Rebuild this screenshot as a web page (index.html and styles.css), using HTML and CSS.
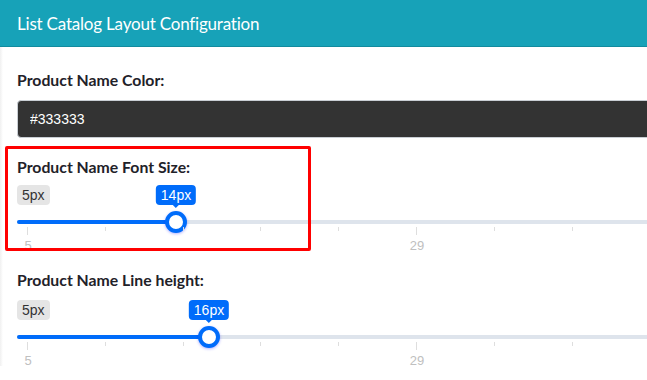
FILE: index.html
```html
<!DOCTYPE html>
<html lang="en">
<head>
  <meta charset="UTF-8">
  <title>List Catalog Layout Configuration</title>
  <link rel="stylesheet" href="styles.css">
</head>
<body>

  <div class="card">
    <div class="card-header">
      <h3 class="card-title">List Catalog Layout Configuration</h3>
    </div>

    <div class="card-body">
      <div class="form-group">
        <label class="form-label">Product Name Color:</label>
        <input class="color-input" type="text" value="#333333">
      </div>

      <div class="highlight">
        <div class="form-group">
          <label class="form-label">Product Name Font Size:</label>
          <div class="irs">
            <div class="irs-labels">
              <span class="irs-min">5px</span>
              <span class="irs-single" style="left: 159px">14px</span>
            </div>
            <div class="irs-line">
              <div class="irs-bar" style="width: 159px"></div>
              <span class="irs-handle" style="left: 159px"></span>
            </div>
            <div class="irs-grid">
              <span class="tick big"><em>5</em></span>
              <span class="tick"></span>
              <span class="tick"></span>
              <span class="tick"></span>
              <span class="tick"></span>
              <span class="tick big"><em>29</em></span>
              <span class="tick"></span>
              <span class="tick"></span>
              <span class="tick"></span>
            </div>
          </div>
        </div>
      </div>

      <div class="form-group">
        <label class="form-label">Product Name Line height:</label>
        <div class="irs">
          <div class="irs-labels">
            <span class="irs-min">5px</span>
            <span class="irs-single" style="left: 192px">16px</span>
          </div>
          <div class="irs-line">
            <div class="irs-bar" style="width: 192px"></div>
            <span class="irs-handle" style="left: 192px"></span>
          </div>
          <div class="irs-grid">
            <span class="tick big"><em>5</em></span>
            <span class="tick"></span>
            <span class="tick"></span>
            <span class="tick"></span>
            <span class="tick"></span>
            <span class="tick big"><em>29</em></span>
            <span class="tick"></span>
            <span class="tick"></span>
            <span class="tick"></span>
          </div>
        </div>
      </div>
    </div>
  </div>

</body>
</html>
```

FILE: styles.css
```css
body {
  margin: 0;
  background: #fff;
  overflow: hidden;
  font-family: Lato, "Liberation Sans", sans-serif;
  color: #212529;
}
.card {
  width: 1000px;
}
.card-header {
  background: #17a2b8;
  border-bottom: 1px solid #128b9e;
  height: 46px;
  padding: 0 17px;
  display: flex;
  align-items: center;
}
.card-title {
  margin: 0;
  font-size: 17px;
  font-weight: 400;
  letter-spacing: -0.2px;
  color: #fff;
}
.card-body {
  padding: 22px 17px 0;
  background: linear-gradient(to right, #f0f0f0, #fff 3px);
}
.form-label {
  display: block;
  font-size: 15.8px;
  font-weight: 700;
  line-height: 21px;
  margin-bottom: 10px;
  color: #1f2229;
}
.color-input {
  display: block;
  box-sizing: border-box;
  width: 100%;
  height: 38px;
  padding: 0 12px;
  background: #333;
  border: 1px solid #c9ced4;
  border-radius: 4px;
  color: #fff;
  font-family: "Liberation Sans", Arial, sans-serif;
  font-size: 14px;
}

/* red annotation frame drawn over the font size field */
.highlight {
  position: relative;
  width: 294px;
  height: 95px;
  margin: 8px 0 0 -12px;
  padding: 10px 0 0 12px;
}
.highlight::after {
  content: "";
  position: absolute;
  inset: 0;
  border: 3px solid #ff0000;
  border-radius: 2px;
  pointer-events: none;
}
.highlight .form-label {
  margin-bottom: 8px;
}
.highlight + .form-group {
  margin-top: 18px;
}

/* range slider */
.irs {
  position: relative;
  width: 800px;
  font-family: "Liberation Sans", Arial, sans-serif;
}
.irs-labels {
  position: relative;
  height: 20px;
}
.irs-min,
.irs-single {
  display: inline-block;
  font-size: 14px;
  line-height: 1;
  padding: 3px 5px;
  border-radius: 4px;
}
.irs-min {
  background: rgba(0, 0, 0, 0.1);
  color: #333;
}
.irs-single {
  position: absolute;
  top: 0;
  transform: translateX(-50%);
  background: #006cfa;
  color: #fff;
}
.irs-single::after {
  content: "";
  position: absolute;
  left: 50%;
  bottom: -6px;
  margin-left: -3px;
  border: 3px solid transparent;
  border-top-color: #006cfa;
}
.irs-line {
  position: relative;
  height: 4px;
  margin-top: 15px;
  background: #dee4ec;
  border-radius: 4px;
}
.irs-bar {
  height: 4px;
  background: #006cfa;
  border-radius: 4px 0 0 4px;
}
.irs-handle {
  position: absolute;
  top: -9px;
  width: 22px;
  height: 22px;
  margin-left: -11px;
  box-sizing: border-box;
  border: 4px solid #006cfa;
  border-radius: 50%;
  background: #fff;
  box-shadow: 0 1px 3px rgba(0, 0, 255, 0.3);
}
.irs-grid {
  display: flex;
  padding: 3px 0 0 10px;
  height: 24px;
}
.tick {
  position: relative;
  box-sizing: border-box;
  flex: 0 0 77.8px;
  height: 4px;
  border-left: 1px solid #dedede;
}
.tick.big {
  height: 8px;
}
.tick em {
  position: absolute;
  top: 12px;
  left: 0;
  transform: translateX(-50%);
  font-style: normal;
  font-size: 13px;
  line-height: 14px;
  color: silver;
}
```
